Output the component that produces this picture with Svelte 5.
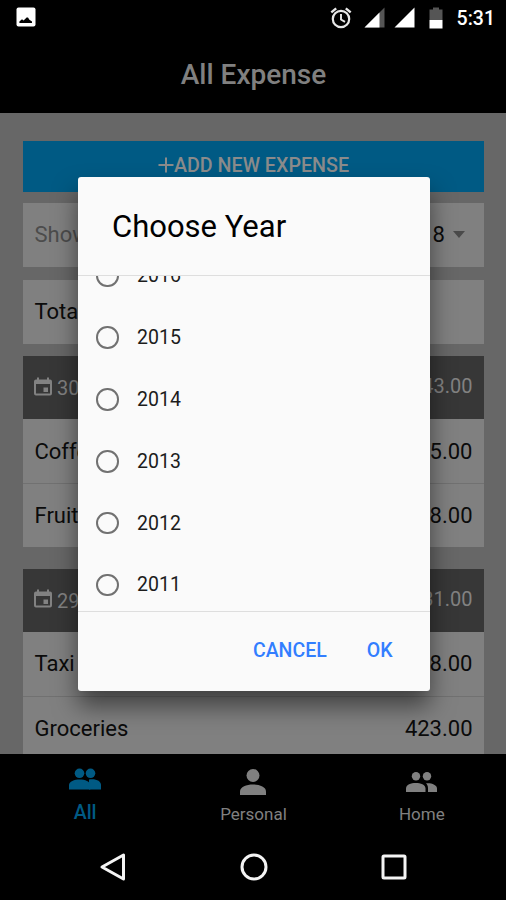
<script lang="ts">
	type Item = { name: string; amount: string };
	type Group = { date: string; total: string; items: Item[] };

	const groups: Group[] = [
		{
			date: '30',
			total: '43.00',
			items: [
				{ name: 'Coffee', amount: '5.00' },
				{ name: 'Fruits', amount: '38.00' }
			]
		},
		{
			date: '29',
			total: '431.00',
			items: [
				{ name: 'Taxi', amount: '8.00' },
				{ name: 'Groceries', amount: '423.00' }
			]
		}
	];

	const years = [2016, 2015, 2014, 2013, 2012, 2011];
	let selected: number | null = $state(null);
</script>

<div class="screen">
	<div class="status-bar">
		<svg class="picture" viewBox="0 0 20 20">
			<rect x="0.5" y="0.5" width="19" height="19" rx="2" fill="#fff" />
			<path d="M3.4 16V14.5L6 12.2L7.6 13.6L10.6 10.4H12L13.4 12.8L16 14.6V16Z" fill="#000" />
		</svg>
		<div class="indicators">
			<svg class="alarm" viewBox="0 0 22 22" fill="none" stroke="#e8e8e8">
				<circle cx="11" cy="12" r="8.2" stroke-width="2.2" />
				<path d="M11 7v5.5l4 2.4" stroke-width="1.9" />
				<path d="M1.3 5.4L6.2 1.3M20.7 5.4L15.8 1.3" stroke-width="2.4" />
			</svg>
			<svg class="signal" viewBox="0 0 21 21">
				<path d="M20.5 0.5V20.5H0.5Z" fill="#555" />
				<path d="M15.5 5.5V20.5H0.5Z" fill="#fff" />
			</svg>
			<svg class="signal second" viewBox="0 0 21 21">
				<path d="M20.5 0.5V20.5H0.5Z" fill="#fff" />
			</svg>
			<svg class="battery" viewBox="0 0 14 22">
				<path d="M0.5 2.5H4V0.5H10V2.5H13.5V13H0.5Z" fill="#555" />
				<path d="M0.5 13H13.5V21.5H0.5Z" fill="#fff" />
			</svg>
			<span class="clock">5:31</span>
		</div>
	</div>

	<header>All Expense</header>

	<main>
		<button class="add">
			<svg viewBox="0 0 16 16" stroke="currentColor" stroke-width="2">
				<path d="M8 0.5V15.5M0.5 8H15.5" />
			</svg>ADD NEW EXPENSE
		</button>

		<div class="card filter">
			<span class="muted">Show</span>
			<span class="year">2018<i class="caret"></i></span>
		</div>

		<div class="card total"><span>Total</span></div>

		{#each groups as group}
			<section class="group">
				<div class="group-head">
					<span class="date">
						<svg viewBox="0 0 18 19">
							<path
								fill="currentColor"
								fill-rule="evenodd"
								d="M3 0.5H5V2.5H13V0.5H15V2.5H16Q18 2.5 18 4.5V16.5Q18 18.5 16 18.5H2Q0 18.5 0 16.5V4.5Q0 2.5 2 2.5H3ZM2 7V16.5H16V7ZM9.5 10.5H14V15H9.5Z"
							/>
						</svg>
						<span class="day">{group.date}</span>
					</span>
					<span>{group.total}</span>
				</div>
				{#each group.items as item}
					<div class="row">
						<span>{item.name}</span>
						<span>{item.amount}</span>
					</div>
				{/each}
			</section>
		{/each}
	</main>

	<nav class="tabs">
		<div class="tab active">
			<svg class="people" viewBox="0 0 32 22" fill="currentColor">
				<circle cx="21.5" cy="5.3" r="4.8" />
				<path d="M20 11.5C27 10.5 32 13 32 17V21.5H20Z" />
				<circle cx="10.5" cy="5.3" r="5.6" fill="#000" />
				<circle cx="10.5" cy="5.3" r="4.8" />
				<path d="M0 21.5V17C0 9.5 21.3 9.5 21.3 17V21.5Z" />
			</svg>
			<span>All</span>
		</div>
		<div class="tab">
			<svg class="person" viewBox="0 0 26 26" fill="currentColor">
				<circle cx="13" cy="6.5" r="6.5" />
				<path d="M0 26V22.5C0 13.2 26 13.2 26 22.5V26Z" />
			</svg>
			<span>Personal</span>
		</div>
		<div class="tab">
			<svg class="group-icon" viewBox="0 0 31 20" fill="currentColor">
				<circle cx="10" cy="4.3" r="4.2" />
				<circle cx="21" cy="4.3" r="4.2" />
				<path d="M0 20V16.5C0 9.3 19.5 9.3 19.5 16.5V20Z" />
				<path d="M20 11.3C25.5 10.8 31 12.8 31 16.5V20H22V16.5C22 14.2 21.3 12.5 20 11.3Z" />
			</svg>
			<span>Home</span>
		</div>
	</nav>

	<div class="system-nav">
		<svg viewBox="0 0 30 30"><path d="M25.5 3V27L4 15Z" /></svg>
		<svg viewBox="0 0 30 30"><circle cx="15" cy="15" r="12" /></svg>
		<svg viewBox="0 0 30 30"><rect x="4" y="4" width="22" height="22" rx="1" /></svg>
	</div>

	<div class="overlay">
		<div class="dialog" role="dialog" aria-label="Choose Year">
			<h2>Choose Year</h2>
			<div class="options">
				{#each years as year}
					<button class="option" onclick={() => (selected = year)}>
						<span class="radio" class:checked={selected === year}></span>
						{year}
					</button>
				{/each}
			</div>
			<div class="actions">
				<button>CANCEL</button>
				<button>OK</button>
			</div>
		</div>
	</div>
</div>

<style>
	:global(body) {
		margin: 0;
		background: #000;
	}

	.screen {
		position: relative;
		display: flex;
		flex-direction: column;
		width: 506px;
		height: 900px;
		overflow: hidden;
		background: #000;
		font-family: Roboto, sans-serif;
	}

	button {
		border: 0;
		padding: 0;
		background: none;
		font-family: inherit;
		cursor: pointer;
	}

	.status-bar {
		display: flex;
		flex: none;
		align-items: center;
		justify-content: space-between;
		box-sizing: border-box;
		height: 36px;
		padding: 0 11px 0 16px;
	}

	.picture {
		width: 20px;
		height: 20px;
		margin-bottom: 2px;
	}

	.indicators {
		display: flex;
		align-items: center;
		color: #fff;
	}

	.alarm {
		width: 22px;
		height: 22px;
		margin: 0 12px 1px 0;
	}

	.signal {
		width: 21px;
		height: 21px;
		margin: 0 9px 1px 0;
	}

	.signal.second {
		margin-right: 14px;
	}

	.battery {
		width: 14px;
		height: 22px;
		margin-right: 14px;
	}

	.clock {
		font-size: 19.5px;
		font-weight: 500;
	}

	header {
		display: flex;
		flex: none;
		align-items: center;
		justify-content: center;
		height: 77px;
		color: #808080;
		font-size: 28px;
		font-weight: 500;
		text-indent: 1px;
	}

	main {
		flex: none;
		box-sizing: border-box;
		height: 641px;
		padding: 28px 22px 0 23px;
		overflow: hidden;
		background: #676767;
	}

	.add {
		display: flex;
		align-items: center;
		justify-content: center;
		box-sizing: border-box;
		width: 100%;
		height: 50.5px;
		padding-bottom: 2px;
		background: #005a84;
		color: #8b8b8b;
		font-size: 19.7px;
		font-weight: 500;
	}

	.add svg {
		width: 16px;
		height: 16px;
	}

	.card,
	.group-head,
	.row {
		display: flex;
		align-items: center;
		justify-content: space-between;
		box-sizing: border-box;
		padding: 0 11.5px;
		background: #808080;
		color: #0b0b0b;
		font-size: 22px;
	}

	.card {
		height: 63.5px;
	}

	.filter {
		margin-top: 11.5px;
		padding-right: 19px;
	}

	.total {
		margin-top: 13.5px;
	}

	.muted {
		color: #4c4c4c;
	}

	.year {
		display: flex;
		align-items: center;
		gap: 8px;
	}

	.caret {
		border: 6.5px solid transparent;
		border-top: 7.5px solid #4a4a4a;
		border-bottom: 0;
	}

	.group {
		margin-top: 12.5px;
	}

	.group + .group {
		margin-top: 21.5px;
	}

	.group-head {
		height: 63px;
		padding: 0 11.5px 3px 11px;
		background: #373737;
		color: #828282;
		font-size: 20px;
	}

	.date {
		display: flex;
		align-items: center;
		gap: 5px;
	}

	.date svg {
		width: 18px;
		height: 19px;
	}

	.day {
		padding-top: 4px;
	}

	.row {
		height: 64px;
	}

	.row + .row {
		border-top: 1px solid #717171;
	}

	.tabs {
		display: grid;
		flex: none;
		grid-template-columns: repeat(3, 1fr);
		height: 79px;
		padding-left: 1px;
	}

	.tab {
		display: flex;
		flex-direction: column;
		align-items: center;
		color: #808080;
		font-size: 17px;
		line-height: 20px;
	}

	.tab.active {
		color: #005a84;
		font-size: 19.5px;
		font-weight: 500;
	}

	.people {
		width: 32px;
		height: 22px;
		margin: 14px 0 13px;
	}

	.person {
		width: 26px;
		height: 26px;
		margin: 15px 0 9px;
	}

	.group-icon {
		width: 31px;
		height: 20px;
		margin: 18px 0 12px;
	}

	.system-nav {
		display: flex;
		justify-content: center;
		gap: 110.5px;
		padding: 19px 0 0 1px;
	}

	.system-nav svg {
		width: 30px;
		height: 30px;
		fill: none;
		stroke: #f4f4f4;
		stroke-width: 3;
		stroke-linejoin: round;
	}

	/* covers the app area, but neither the status bar nor the system buttons */
	.overlay {
		position: absolute;
		inset: 36px 0 68px;
		display: flex;
		align-items: center;
		justify-content: center;
		padding-left: 1.5px;
	}

	.dialog {
		display: flex;
		flex-direction: column;
		width: 351.5px;
		height: 514.5px;
		border-radius: 3px;
		background: #fafafa;
		box-shadow: 0 15px 24px rgba(0, 0, 0, 0.5);
		overflow: hidden;
	}

	h2 {
		box-sizing: border-box;
		height: 98.5px;
		margin: 0;
		padding: 32px 34px 0;
		color: #000;
		font-size: 31px;
		font-weight: 400;
		line-height: 36px;
	}

	.options {
		display: flex;
		flex-direction: column;
		justify-content: flex-end;
		box-sizing: border-box;
		height: 336.5px;
		padding: 0 18px;
		border-top: 1.5px solid #dedede;
		border-bottom: 1.5px solid #dedede;
		overflow: hidden;
	}

	.option {
		display: flex;
		flex: none;
		align-items: center;
		gap: 18.5px;
		height: 61.8px;
		color: #1c1c1c;
		font-size: 19.5px;
	}

	.option:last-child {
		margin-bottom: -5px;
	}

	.radio {
		box-sizing: border-box;
		width: 22.5px;
		height: 22.5px;
		border: 2.5px solid #717171;
		border-radius: 50%;
	}

	.radio.checked {
		border-color: #327eff;
		background: #327eff;
		box-shadow: inset 0 0 0 3px #fafafa;
	}

	.actions {
		display: flex;
		justify-content: flex-end;
		gap: 40px;
		height: 77px;
		padding-right: 37px;
	}

	.actions button {
		color: #327eff;
		font-size: 19.5px;
		font-weight: 500;
	}
</style>
